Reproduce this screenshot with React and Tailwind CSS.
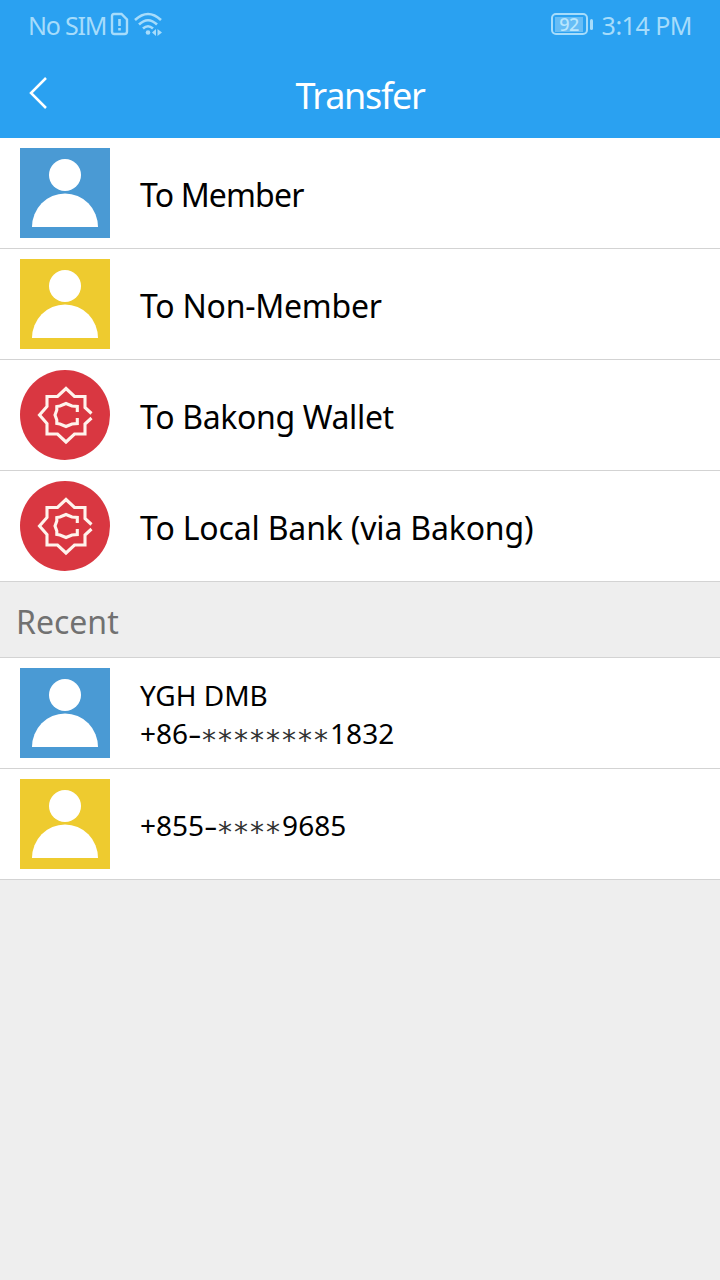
import React from 'react';

const menu = [
  { icon: 'member', label: 'To Member', tracking: 'tracking-[-0.85px]' },
  { icon: 'guest', label: 'To Non-Member', tracking: 'tracking-[-0.25px]' },
  { icon: 'bakong', label: 'To Bakong Wallet', tracking: 'tracking-[-0.35px]' },
  { icon: 'bakong', label: 'To Local Bank (via Bakong)', tracking: 'tracking-[-0.17px]' },
];

const recent = [
  { icon: 'member', name: 'YGH DMB', prefix: '+86', mask: '********', last: '1832' },
  { icon: 'guest', prefix: '+855', mask: '****', last: '9685' },
];

function PersonIcon({ className }) {
  return (
    <svg viewBox="0 0 90 90" className={'size-[90px] shrink-0 ' + className}>
      <circle cx="45" cy="27" r="16" fill="#fff" />
      <path d="M12 79A33 33.500 0 0 1 78 79Z" fill="#fff" />
    </svg>
  );
}

function BakongIcon() {
  return (
    <svg viewBox="0 0 90 90" className="size-[90px] shrink-0" fill="none" stroke="#fff3ec" strokeWidth="3.1">
      <circle cx="45" cy="45" r="45" fill="#d93741" stroke="none" />
      <path d="M71.500 43.500L65 37.500V26.500H54.500L46 18.500L37.500 26.500H27V36.500L19.500 45L27 53.500V64H37.500L46 72L54.500 64H65V54L71.500 48" />
      <path d="M57.300 42V36.500L52 36L46 33.500L40 36L36.800 36.500V40L35 45L36.800 50V53.500L40 54L46 56.500L52 54L57.300 53.500V48" />
    </svg>
  );
}

function RowIcon({ icon }) {
  if (icon === 'bakong') return <BakongIcon />;
  return <PersonIcon className={icon === 'member' ? 'bg-[#4a9ad4]' : 'bg-[#eecb2f]'} />;
}

function StatusBar() {
  return (
    <div className="flex h-[50px] items-center justify-between px-[28px] text-[25px] text-[#a6dcfb]">
      <div className="flex items-center">
        <span className="w-[82px] whitespace-nowrap pt-px tracking-[-1.2px]">No SIM</span>
        <svg width="19" height="24" viewBox="0 0 19 24" className="mb-[2px]" fill="none" stroke="currentColor" strokeWidth="2.4">
          <path d="M4 2H11.500L17 7.500V19.500Q17 22 14.500 22H4.500Q2 22 2 19.500V4Q2 2 4 2Z" />
          <path d="M9.500 7V14M9.500 16V18.600" strokeWidth="2.600" />
        </svg>
        <svg width="30" height="24" viewBox="0 0 30 24" className="mb-[2px] ml-[5px]" fill="none" stroke="currentColor" strokeWidth="2.6">
          <path d="M1 8Q14 -4 27 8M5 12.500Q14 4 23 12.500M9 16.500Q14 12 19 16.500" />
          <circle cx="14" cy="20.500" r="2.300" fill="currentColor" stroke="none" />
          <path d="M22 17V24L18 20.500ZM23.500 17L28 20.500L23.500 24Z" fill="currentColor" stroke="none" />
        </svg>
      </div>
      <div className="flex items-center">
        <div className="mb-[2px] flex h-[22px] w-[37px] items-center justify-center rounded-[5px] border-2 border-[#a6dcfb]">
          <span className="flex h-[15px] w-[28px] items-center justify-center bg-[#67bdf6] text-[18px] leading-none font-medium tracking-[-0.5px] text-[#b9e6fd]">92</span>
        </div>
        <div className="mb-[2px] ml-[2px] h-[11px] w-[3px] rounded-sm bg-[#a6dcfb]" />
        <span className="ml-[9px] whitespace-nowrap pt-px tracking-[-0.5px]">3:14 PM</span>
      </div>
    </div>
  );
}

export default function App() {
  return (
    <div className="min-h-[1280px] w-full bg-[#eeeeee] font-['Noto_Sans',sans-serif] text-black">
      <header className="h-[138px] bg-[#2aa1f1] text-white">
        <StatusBar />
        <div className="grid h-[88px] grid-cols-[80px_1fr_80px] items-center">
          <button className="pb-[2px] pl-[28px]">
            <svg width="20" height="34" viewBox="0 0 20 34" fill="none" stroke="currentColor" strokeWidth="2.5">
              <path d="M18 2L3 17L18 32" />
            </svg>
          </button>
          <h1 className="pt-[4px] text-center text-[36px] leading-[50px] tracking-[-1.3px]">Transfer</h1>
        </div>
      </header>

      <ul className="bg-white">
        {menu.map(m => (
          <li key={m.label} className="flex h-[111px] items-center gap-[30px] border-b border-[#d3d3d3] px-5">
            <RowIcon icon={m.icon} />
            <span className={'pt-[4px] text-[32px] whitespace-nowrap ' + m.tracking}>{m.label}</span>
          </li>
        ))}
      </ul>

      <h2 className="flex h-[76px] items-center border-b border-[#d3d3d3] px-4 pt-1 text-[32px] text-[#717171]">Recent</h2>

      <ul className="bg-white">
        {recent.map(r => (
          <li key={r.last} className="flex h-[111px] items-center gap-[30px] border-b border-[#d3d3d3] px-5">
            <RowIcon icon={r.icon} />
            <div className="pt-[2px] text-[28px] leading-[38px]">
              {r.name && <p>{r.name}</p>}
              <p className="whitespace-nowrap">
                {r.prefix}
                <span className="mr-[5px] inline-block origin-left scale-x-150">-</span>
                <span className="relative top-[6px] font-['DejaVu_Sans',sans-serif] leading-none tracking-[2px] text-[#333]">{r.mask}</span>
                {r.last}
              </p>
            </div>
          </li>
        ))}
      </ul>
    </div>
  );
}
